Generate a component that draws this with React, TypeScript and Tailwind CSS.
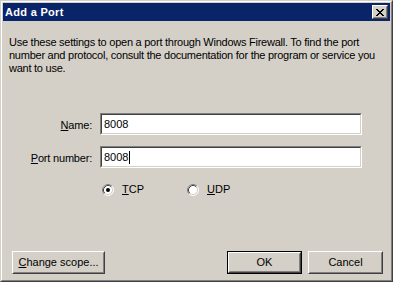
import React from "react";

const font = { fontFamily: '"Liberation Sans", Arial, sans-serif' };

function Raised({ children, className = "" }: { children: React.ReactNode; className?: string }) {
  return (
    <div className={`border border-t-white border-l-white border-r-[#404040] border-b-[#404040] ${className}`}>
      <div className="flex h-full w-full items-center justify-center border border-t-[#d4d0c8] border-l-[#d4d0c8] border-r-[#808080] border-b-[#808080] bg-[#d4d0c8]">
        {children}
      </div>
    </div>
  );
}

function Button({ children, isDefault = false }: { children: React.ReactNode; isDefault?: boolean }) {
  if (isDefault) {
    return (
      <div className="h-[23px] w-[75px] border border-black">
        <Raised className="h-full w-full">{children}</Raised>
      </div>
    );
  }
  return <Raised className="h-[23px] w-[75px]">{children}</Raised>;
}

function Field({ value, caret = false }: { value: string; caret?: boolean }) {
  return (
    <div className="h-[22px] w-[262px] border border-t-[#808080] border-l-[#808080] border-r-white border-b-white">
      <div className="flex h-full w-full items-center border border-t-[#404040] border-l-[#404040] border-r-[#d4d0c8] border-b-[#d4d0c8] bg-white pl-[2px] text-[11px] text-black">
        <span>{value}</span>
        {caret && <span className="ml-px h-[13px] w-px bg-black" />}
      </div>
    </div>
  );
}

function Radio({ checked, label }: { checked: boolean; label: React.ReactNode }) {
  return (
    <div className="flex items-center gap-[8px]">
      <svg width="12" height="12" viewBox="0 0 12 12">
        <circle cx="6" cy="6" r="5" fill="white" />
        <path d="M2.11 9.89 A5.5 5.5 0 0 1 9.89 2.11" fill="none" stroke="#808080" strokeWidth="1" />
        <path d="M9.89 2.11 A5.5 5.5 0 0 1 2.11 9.89" fill="none" stroke="#ffffff" strokeWidth="1" />
        <path d="M2.82 9.18 A4.5 4.5 0 0 1 9.18 2.82" fill="none" stroke="#404040" strokeWidth="1" />
        <path d="M9.18 2.82 A4.5 4.5 0 0 1 2.82 9.18" fill="none" stroke="#d4d0c8" strokeWidth="1" />
        {checked && <circle cx="6" cy="6" r="2" fill="black" />}
      </svg>
      <span className="text-[11px] leading-[13px]">{label}</span>
    </div>
  );
}

export default function App() {
  return (
    <div style={font} className="h-[282px] w-[393px] select-none text-black">
      <div className="h-full w-full border border-t-[#d4d0c8] border-l-[#d4d0c8] border-r-[#404040] border-b-[#404040]">
        <div className="flex h-full w-full flex-col border border-t-white border-l-white border-r-[#808080] border-b-[#808080] bg-[#d4d0c8] p-px">
          {/* title bar */}
          <div className="flex h-[18px] items-center justify-between bg-[#0a246a] pl-[2px] pr-[2px]">
            <span className="text-[11px] font-bold tracking-[0.3px] text-white">Add a Port</span>
            <Raised className="h-[14px] w-[16px]">
              <svg width="8" height="7" viewBox="0 0 8 7" shapeRendering="crispEdges">
                <path
                  d="M0 0h2v1h-2zM6 0h2v1h-2zM1 1h2v1h-2zM5 1h2v1h-2zM2 2h4v1h-4zM3 3h2v1h-2zM2 4h4v1h-4zM1 5h2v1h-2zM5 5h2v1h-2zM0 6h2v1h-2zM6 6h2v1h-2z"
                  fill="black"
                />
              </svg>
            </Raised>
          </div>

          {/* body */}
          <div className="flex flex-1 flex-col px-[6px] pb-[5px] pt-[15px]">
            <p className="whitespace-nowrap text-[11px] leading-[13px] tracking-[-0.25px]">
              <span className="block">Use these settings to open a port through Windows Firewall. To find the port</span>
              <span className="block">number and protocol, consult the documentation for the program or service you</span>
              <span className="block">want to use.</span>
            </p>

            <div className="mt-[38px] flex flex-col gap-[11px]">
              <div className="flex items-center">
                <span className="w-[83px] pt-[2px] text-right text-[11px] tracking-[-0.2px]">
                  <span className="underline">N</span>ame:
                </span>
                <div className="ml-[8px]">
                  <Field value="8008" />
                </div>
              </div>
              <div className="flex items-center">
                <span className="w-[83px] pt-[2px] text-right text-[11px] tracking-[-0.2px]">
                  <span className="underline">P</span>ort number:
                </span>
                <div className="ml-[8px]">
                  <Field value="8008" caret />
                </div>
              </div>
            </div>

            <div className="ml-[93px] mt-[15px] flex gap-[43px]">
              <Radio checked label={<><span className="underline">T</span>CP</>} />
              <Radio checked={false} label={<><span className="underline">U</span>DP</>} />
            </div>

            <div className="mt-auto flex items-center text-[11px]">
              <div className="ml-[3px]">
                <Raised className="h-[23px] w-[93px]">
                  <span>
                    <span className="underline">C</span>hange scope...
                  </span>
                </Raised>
              </div>
              <div className="ml-auto mr-[1px] flex gap-[6px]">
                <Button isDefault>OK</Button>
                <Button>Cancel</Button>
              </div>
            </div>
          </div>
        </div>
      </div>
    </div>
  );
}
